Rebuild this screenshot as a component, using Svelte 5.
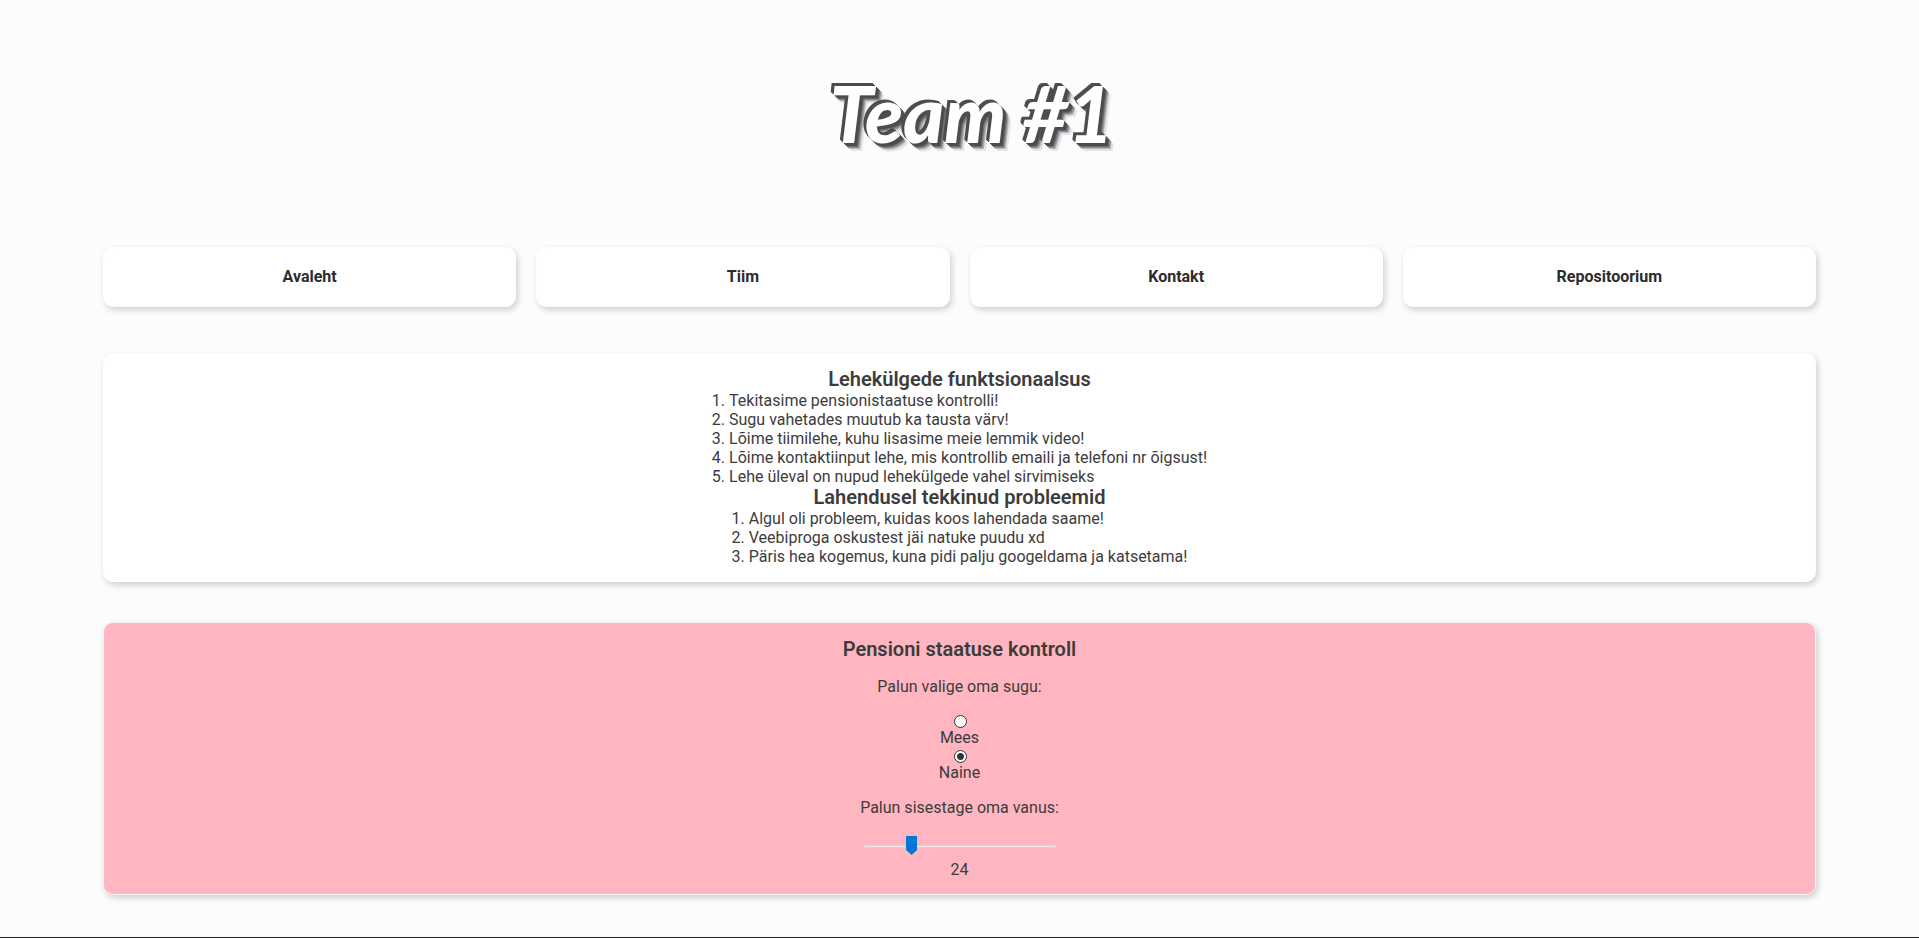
<script>
  const links = ['Avaleht', 'Tiim', 'Kontakt', 'Repositoorium'];
  const features = [
    'Tekitasime pensionistaatuse kontrolli!',
    'Sugu vahetades muutub ka tausta värv!',
    'Lõime tiimilehe, kuhu lisasime meie lemmik video!',
    'Lõime kontaktiinput lehe, mis kontrollib emaili ja telefoni nr õigsust!',
    'Lehe üleval on nupud lehekülgede vahel sirvimiseks'
  ];
  const problems = [
    'Algul oli probleem, kuidas koos lahendada saame!',
    'Veebiproga oskustest jäi natuke puudu xd',
    'Päris hea kogemus, kuna pidi palju googeldama ja katsetama!'
  ];
  let gender = $state('naine');
  let age = $state(24);
</script>

<div class="page">
  <header><h1>Team #1</h1></header>

  <nav>
    {#each links as link}
      <a class="card" href="#{link.toLowerCase()}">{link}</a>
    {/each}
  </nav>

  <main>
    <section class="card">
      <h2>Lehekülgede funktsionaalsus</h2>
      <ol>
        {#each features as item}<li>{item}</li>{/each}
      </ol>
      <h2>Lahendusel tekkinud probleemid</h2>
      <ol>
        {#each problems as item}<li>{item}</li>{/each}
      </ol>
    </section>

    <section class="card form" class:pink={gender === 'naine'} class:blue={gender === 'mees'}>
      <h2>Pensioni staatuse kontroll</h2>
      <p>Palun valige oma sugu:</p>
      <div class="choices">
        <input id="mees" type="radio" name="gender" value="mees" bind:group={gender} />
        <label for="mees">Mees</label>
        <input id="naine" type="radio" name="gender" value="naine" bind:group={gender} />
        <label for="naine">Naine</label>
      </div>
      <label class="prompt" for="age">Palun sisestage oma vanus:</label>
      <input id="age" type="range" min="1" max="100" bind:value={age} />
      <output for="age">{age}</output>
    </section>
  </main>
</div>
<footer></footer>

<style>
  :global(body) {
    background: #fcfcfc;
    color: #3c3c3c;
    font: 16px/19px Roboto, sans-serif;
  }
  .page {
    width: 90%;
    max-width: 1713px;
    margin: 0 auto;
    padding-bottom: 42px;
  }
  header {
    padding: 56px 0 77px 24px;
    text-align: center;
  }
  h1 {
    margin: 0;
    color: #fff;
    font: italic 900 78px/114px Lato, sans-serif;
    text-shadow:
      -3px -3px 0 #4d4d4d, -2px -2px 0 #4d4d4d, -1px -1px 0 #4d4d4d,
      1px 1px 0 #4d4d4d, 2px 2px 0 #4d4d4d, 3px 3px 0 #4d4d4d,
      4px 4px 0 #6b6d70, 5px 5px 0 #8e9094, 6px 6px 0 #b3b5b9,
      8px 8px 0 #e3e4e8;
  }
  nav {
    display: grid;
    grid-template-columns: repeat(4, 1fr);
    gap: 20px;
    margin-bottom: 46px;
  }
  .card {
    box-sizing: border-box;
    border: 1px solid #fefefe;
    border-radius: 10px;
    background: #fff;
    box-shadow: 2px 3px 6px rgba(0, 0, 0, 0.18);
  }
  nav .card {
    padding: 19px;
    color: #2c2c2c;
    font-weight: 700;
    line-height: 20px;
    text-align: center;
    text-decoration: none;
  }
  main {
    display: grid;
    gap: 40px;
  }
  section {
    display: flex;
    flex-direction: column;
    align-items: center;
    padding: 14px 15px 15px;
  }
  h2 {
    margin: 0;
    font-size: 20px;
    font-weight: 600;
    line-height: 23px;
  }
  ol {
    margin: 0;
    padding: 0;
    list-style-position: inside;
  }
  .form {
    padding-top: 15px;
    border-color: #f4f4f4;
  }
  .pink {
    background: #ffb6c1;
  }
  .blue {
    background: #add8e6;
  }
  p,
  .prompt {
    margin: 16px 0;
  }
  .choices {
    display: flex;
    flex-direction: column;
    align-items: center;
  }
  input[type='radio'] {
    appearance: none;
    box-sizing: border-box;
    width: 13px;
    height: 13px;
    margin: 3px 0 0 3px;
    border: 1px solid #333;
    border-radius: 50%;
    background: #fff;
  }
  input[type='radio']:checked {
    background: radial-gradient(circle, #333 3px, #fff 4px);
  }
  input[type='range'] {
    appearance: none;
    width: 192px;
    height: 21px;
    margin: 3px 0;
    background: transparent;
  }
  input[type='range']::-webkit-slider-runnable-track {
    box-sizing: border-box;
    height: 3px;
    border: 1px solid #d3d3d3;
    background: #e7eaea;
  }
  input[type='range']::-webkit-slider-thumb {
    appearance: none;
    width: 11px;
    height: 19px;
    margin-top: -10px;
    background: #0078d7;
    clip-path: polygon(0 0, 100% 0, 100% 74%, 50% 100%, 0 74%);
  }
  footer {
    height: 1px;
    background: #222;
  }
</style>
